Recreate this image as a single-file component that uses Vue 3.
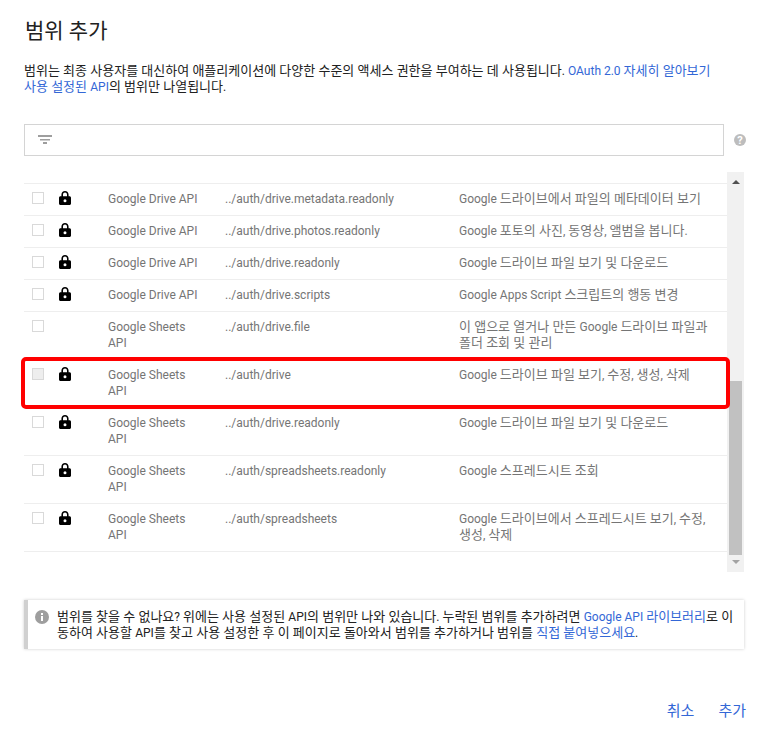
<script setup>
import { h } from 'vue'

const Ko = (props) =>
  props.t
    .split(/([\uAC00-\uD7A3][\uAC00-\uD7A3 ]*)/)
    .filter(Boolean)
    .map((s) => (/[\uAC00-\uD7A3]/.test(s) ? h('span', { class: 'ko' }, s) : s))
Ko.props = ['t']

const rows = [
  { api: 'Google Drive API', scope: '../auth/drive.metadata.readonly', desc: 'Google 드라이브에서 파일의 메타데이터 보기', lock: true },
  { api: 'Google Drive API', scope: '../auth/drive.photos.readonly', desc: 'Google 포토의 사진, 동영상, 앨범을 봅니다.', lock: true },
  { api: 'Google Drive API', scope: '../auth/drive.readonly', desc: 'Google 드라이브 파일 보기 및 다운로드', lock: true },
  { api: 'Google Drive API', scope: '../auth/drive.scripts', desc: 'Google Apps Script 스크립트의 행동 변경', lock: true },
  { api: 'Google Sheets API', scope: '../auth/drive.file', desc: '이 앱으로 열거나 만든 Google 드라이브 파일과 폴더 조회 및 관리', lock: false },
  { api: 'Google Sheets API', scope: '../auth/drive', desc: 'Google 드라이브 파일 보기, 수정, 생성, 삭제', lock: true, marked: true },
  { api: 'Google Sheets API', scope: '../auth/drive.readonly', desc: 'Google 드라이브 파일 보기 및 다운로드', lock: true },
  { api: 'Google Sheets API', scope: '../auth/spreadsheets.readonly', desc: 'Google 스프레드시트 조회', lock: true },
  { api: 'Google Sheets API', scope: '../auth/spreadsheets', desc: 'Google 드라이브에서 스프레드시트 보기, 수정, 생성, 삭제', lock: true },
]
</script>

<template>
  <div class="page">
    <h1 class="title">범위 추가</h1>
    <p class="intro">
      <Ko t="범위는 최종 사용자를 대신하여 애플리케이션에 다양한 수준의 액세스 권한을 부여하는 데 사용됩니다. " />
      <a class="link"><Ko t="OAuth 2.0 자세히 알아보기" /></a><br />
      <a class="link"><Ko t="사용 설정된 API" /></a><Ko t="의 범위만 나열됩니다." />
    </p>

    <div class="filter-row">
      <div class="filter">
        <svg width="14" height="9" viewBox="0 0 14 9" fill="#9e9e9e">
          <rect x="0" y="0" width="14" height="2" />
          <rect x="2" y="4" width="10" height="1.500" />
          <rect x="5" y="7" width="4" height="2" />
        </svg>
      </div>
      <svg class="help" width="12" height="12" viewBox="0 0 12 12">
        <circle cx="6" cy="6" r="6" fill="#bdbdbd" />
        <text x="6" y="10" text-anchor="middle" font-size="11" font-weight="700" fill="#fff" font-family="Roboto, sans-serif">?</text>
      </svg>
    </div>

    <div class="list-wrap">
      <div class="list">
        <div v-for="r in rows" :key="r.api + r.scope" class="row">
          <span class="check" :class="{ disabled: r.marked }"></span>
          <span class="lock-cell">
            <svg v-if="r.lock" width="12" height="14" viewBox="0 0 12 14">
              <path d="M6 0C3.900 0 2.400 1.600 2.400 3.700V5.200H1.500C.7 5.200 0 5.900 0 6.700v5.800C0 13.300.7 14 1.500 14h9c.8 0 1.500-.7 1.500-1.500V6.700c0-.8-.7-1.500-1.500-1.500h-.9V3.700C9.600 1.600 8.100 0 6 0zM4 5.200V3.700C4 2.500 4.900 1.600 6 1.600s2 .9 2 2.100v1.500H4zM6 8.200a1.500 1.500 0 1 1 0 3 1.500 1.500 0 0 1 0-3z" fill="#000" fill-rule="evenodd" />
            </svg>
          </span>
          <span class="api">{{ r.api }}</span>
          <span class="scope">{{ r.scope }}</span>
          <span class="desc"><Ko :t="r.desc" /></span>
          <div v-if="r.marked" class="marker"></div>
        </div>
      </div>
      <div class="scrollbar">
        <span class="arrow up"></span>
        <div class="track"><div class="thumb"></div></div>
        <span class="arrow down"></span>
      </div>
    </div>

    <div class="notice">
      <svg class="info" width="14" height="14" viewBox="0 0 14 14">
        <circle cx="7" cy="7" r="7" fill="#9e9e9e" />
        <rect x="6" y="6" width="2" height="5" fill="#fff" />
        <rect x="6" y="3" width="2" height="2" fill="#fff" />
      </svg>
      <p class="notice-text">
        <Ko t="범위를 찾을 수 없나요? 위에는 사용 설정된 API의 범위만 나와 있습니다. 누락된 범위를 추가하려면 " /><a class="link"><Ko t="Google API 라이브러리" /></a><Ko t="로 이동하여 사용할 API를 찾고 사용 설정한 후 이 페이지로 돌아와서 범위를 추가하거나 범위를 " /><a class="link"><Ko t="직접 붙여넣으세요" /></a>.
      </p>
    </div>

    <div class="actions">
      <a class="btn">취소</a>
      <a class="btn">추가</a>
    </div>
  </div>
</template>

<style>
html, body { margin: 0; background: #fff; }
.ko { font-size: 13px; }
</style>

<style scoped>
.page {
  width: 768px;
  height: 738px;
  box-sizing: border-box;
  padding: 0 24px;
  overflow: hidden;
  font-family: Roboto, "Noto Sans CJK KR", sans-serif;
  font-size: 12px;
  line-height: 16px;
  color: #212121;
}
.title {
  margin: 0;
  padding: 18px 0 0 1px;
  font-size: 21px;
  line-height: 26px;
  font-weight: 400;
  color: #212121;
}
.intro {
  margin: 19px 0 0;
  white-space: nowrap;
}
.link { color: #3367d6; }
.filter-row {
  margin-top: 29px;
  display: flex;
  align-items: center;
  gap: 10px;
}
.filter {
  flex: none;
  width: 698px;
  height: 30px;
  border: 1px solid #d4d4d4;
  display: flex;
  align-items: center;
}
.filter svg { margin-left: 13px; margin-top: -2px; }
.help { flex: none; }
.list-wrap {
  margin-top: 16px;
  height: 400px;
  display: flex;
  width: 720px;
}
.list {
  width: 703px;
  padding-top: 11px;
  flex: none;
}
.row {
  position: relative;
  display: flex;
  box-sizing: border-box;
  min-height: 32px;
  border-top: 1px solid #eeeeee;
  padding: 7px 0 8px;
  color: #757575;
}
.row:last-child { height: 49px; border-bottom: 1px solid #eeeeee; }
.check {
  flex: none;
  width: 10px;
  height: 10px;
  border: 1px solid #d9d9d9;
  margin: 1px 0 0 8px;
}
.check.disabled { background: #eeeeee; }
.lock-cell {
  flex: none;
  width: 64px;
  height: 16px;
  padding-left: 15px;
  box-sizing: border-box;
}
.lock-cell svg { display: block; }
.api { flex: none; width: 117px; padding-right: 20px; box-sizing: border-box; }
.scope { flex: none; width: 234px; }
.desc { flex: none; width: 255px; }
.marker {
  position: absolute;
  z-index: 1;
  left: -3px;
  top: -3px;
  width: 709px;
  height: 52px;
  box-sizing: border-box;
  border: 4px solid #ff0000;
  border-radius: 5px;
}
.scrollbar {
  flex: none;
  width: 17px;
  background: #f1f1f1;
  display: flex;
  flex-direction: column;
  align-items: center;
}
.arrow { flex: none; width: 0; height: 0; border-left: 4px solid transparent; border-right: 4px solid transparent; }
.arrow.up { margin: 8px 0 4px; border-bottom: 4px solid #505050; }
.arrow.down { margin: 5px 0 8px; border-top: 4px solid #a3a3a3; }
.track { flex: 1; width: 100%; display: flex; flex-direction: column; justify-content: flex-end; }
.thumb { height: 174px; width: 13px; margin-left: 2px; background: #c1c1c1; }
.notice {
  margin-top: 28px;
  width: 720px;
  height: 49px;
  box-sizing: border-box;
  display: flex;
  border-left: 4px solid #d0d0d0;
  box-shadow: 0 0 3px rgba(0, 0, 0, 0.2);
  padding: 9px 8px 0 7px;
  color: #212121;
}
.info { flex: none; margin: 1px 8px 0 0; }
.notice-text { margin: 0; }
.actions {
  margin-top: 52px;
  display: flex;
  justify-content: flex-end;
  gap: 24px;
  width: 722px;
  font-size: 15px;
  line-height: 20px;
}
.btn { color: #3367d6; }
</style>
